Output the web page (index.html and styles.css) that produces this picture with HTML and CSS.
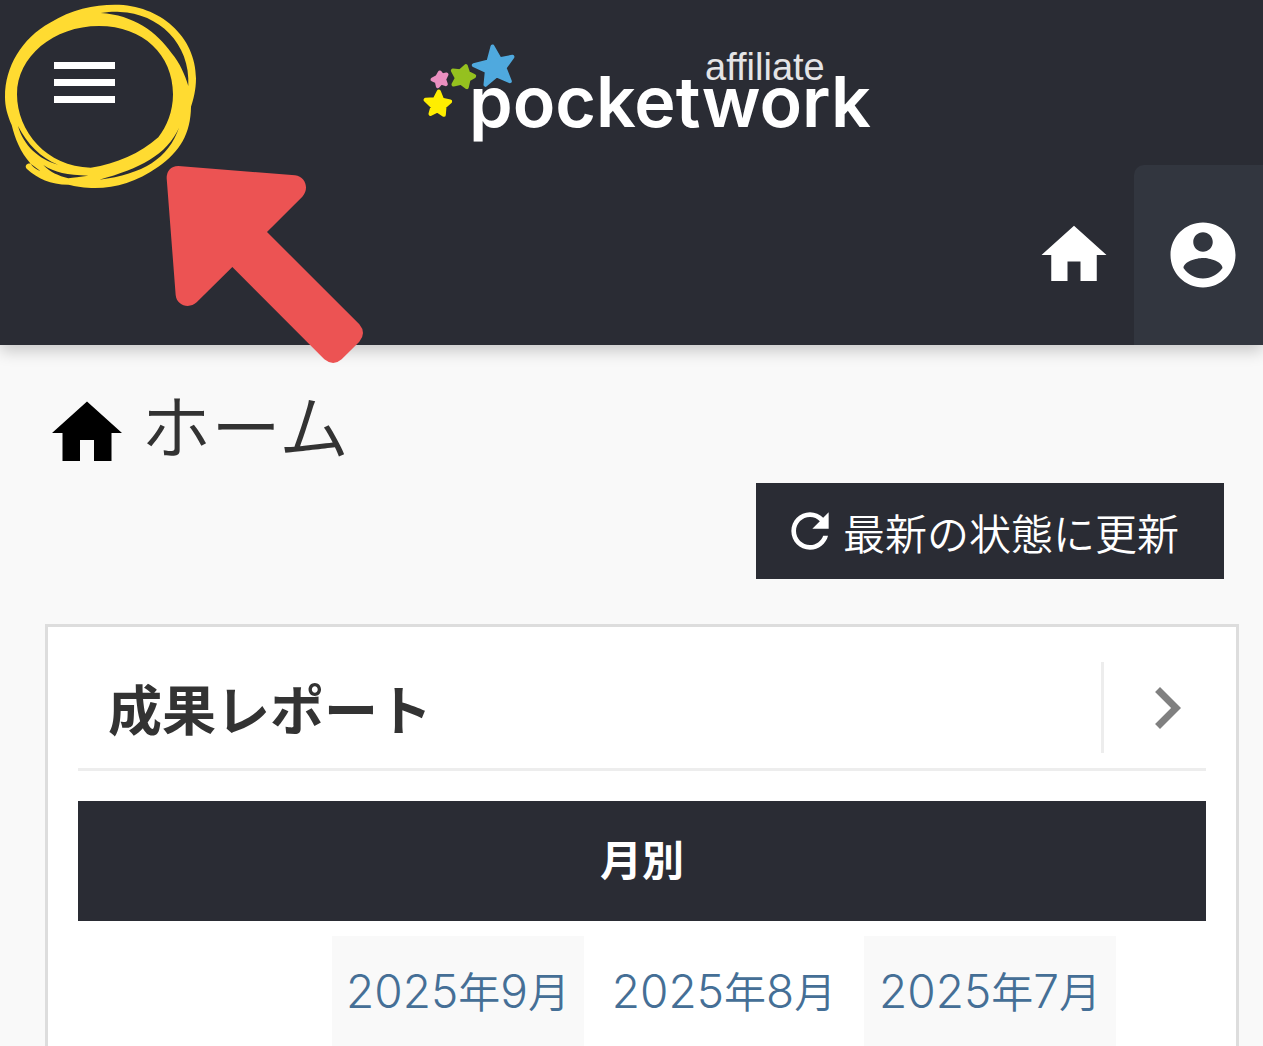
FILE: index.html
```html
<!DOCTYPE html>
<html lang="ja">
<head>
  <meta charset="UTF-8">
  <meta name="viewport" content="width=device-width, initial-scale=1">
  <title>ホーム | affiliate pocketwork</title>
  <link rel="stylesheet" href="styles.css">
</head>
<body>

  <header class="site-header">
    <div class="header-top">
      <button type="button" class="menu-btn" aria-label="メニュー">
        <span class="bar"></span>
        <span class="bar"></span>
        <span class="bar"></span>
      </button>
      <a href="#" class="logo">
        <svg width="480" height="120" viewBox="0 0 480 120">
          <g transform="translate(18.5 7.5) scale(.3333)" stroke-width="12" stroke-linejoin="round">
            <path fill="#4fa9de" stroke="#4fa9de" d="M246 48L268 86 306 79 282 112 298 152 258 135 225 163 229 122 190 104 234 93z"/>
            <path fill="#95c11f" stroke="#95c11f" d="M166 107L173 128 191 137 174 147 169 170 152 157 129 162 139 143 127 120 149 122z"/>
            <path fill="#ea8fc0" stroke="#ea8fc0" d="M88 126L95 135 108 132 101 147 106 161 92 156 82 167 79 153 66 147 80 140z"/>
            <path fill="#ffee00" stroke="#ffee00" d="M85 183L95 208 119 213 102 228 100 253 81 240 60 250 66 228 45 208 73 206z"/>
          </g>
          <text class="logo-sub" x="313" y="57">affiliate</text>
          <text class="logo-name" x="77" y="104">pocketwork</text>
        </svg>
      </a>
    </div>
    <nav class="header-nav">
      <a href="#" class="nav-item" aria-label="ホーム">
        <svg width="78" height="78" viewBox="0 0 24 24"><path d="M10 20v-6h4v6h5v-8h3L12 3 2 12h3v8z"/></svg>
      </a>
      <a href="#" class="nav-item account" aria-label="アカウント">
        <svg width="78" height="78" viewBox="0 0 24 24"><path d="M12 2C6.48 2 2 6.48 2 12s4.48 10 10 10 10-4.48 10-10S17.52 2 12 2zm0 3c1.66 0 3 1.34 3 3s-1.34 3-3 3-3-1.34-3-3 1.34-3 3-3zm0 14.2c-2.5 0-4.71-1.28-6-3.22.03-1.99 4-3.08 6-3.08 1.99 0 5.97 1.09 6 3.08-1.29 1.94-3.5 3.22-6 3.22z"/></svg>
      </a>
    </nav>
    <!-- Hand drawn circle and arrow pointing at the menu -->
    <svg class="guide" width="380" height="380" viewBox="0 0 1140 1140" aria-hidden="true">
      <path fill="#ffdb31" fill-rule="evenodd" d="M15 290C15 200 65 115 150 68C215 28 280 14 345 14C480 14 588 110 588 235C588 270 580 300 573 320C572 400 540 455 475 500C410 545 350 564 285 564C255 564 225 559 205 554C150 553 115 537 80 506C73 498 80 489 92 491C60 455 45 415 35 375C22 345 15 320 15 290z
        M51 283C51 395 140 500 272 503C350 492 420 460 475 412C500 380 519 335 519 283C519 165 430 78 297 78C160 78 51 170 51 283z
        M302 39C400 45 470 95 515 160C540 190 555 225 565 258C572 130 475 40 360 36C345 35 330 35 302 39z
        M54 378C70 435 115 478 174 494C120 472 82 432 54 378z
        M537 383C500 465 420 505 298 539C430 522 505 475 537 383z
        M130 495C150 517 175 527 205 535C220 532 240 531 265 527C200 525 165 518 130 495z
        M92 491C98 500 108 508 122 514z"/>
      <path fill="#ec5353" d="M535 498L885 526C918 530 928 568 907 590L801 696L1078 973Q1100 999 1078 1025L1025 1078Q1000 1100 973 1078L697 801L590 907C568 928 530 917 527 885L500 535Q500 500 535 498z"/>
    </svg>
  </header>

  <main class="content">
    <h1 class="page-title">
      <svg width="84" height="84" viewBox="0 0 24 24"><path d="M10 20v-6h4v6h5v-8h3L12 3 2 12h3v8z"/></svg>
      ホーム
    </h1>
    <div class="toolbar">
      <button type="button" class="refresh-btn">
        <svg width="56" height="56" viewBox="0 0 24 24"><path d="M17.65 6.35C16.2 4.9 14.21 4 12 4c-4.42 0-7.99 3.58-7.99 8s3.57 8 7.99 8c3.73 0 6.84-2.55 7.73-6h-2.08c-.82 2.33-3.04 4-5.65 4-3.31 0-6-2.69-6-6s2.69-6 6-6c1.66 0 3.14.69 4.22 1.78L13 11h7V4l-2.35 2.35z"/></svg>
        最新の状態に更新
      </button>
    </div>

    <section class="card">
      <div class="card-header">
        <h2>成果レポート</h2>
        <a href="#" class="more" aria-label="成果レポート">
          <svg width="28" height="42" viewBox="8 6 8 12"><path d="M10 6L8.59 7.41 13.17 12l-4.58 4.59L10 18l6-6z"/></svg>
        </a>
      </div>
      <h3 class="banner">月別</h3>
      <table class="months">
        <tr>
          <td class="label"></td>
          <th><a href="#"><span class="num">2025</span>年<span class="num">9</span>月</a></th>
          <th><a href="#"><span class="num">2025</span>年<span class="num">8</span>月</a></th>
          <th><a href="#"><span class="num">2025</span>年<span class="num">7</span>月</a></th>
          <td></td>
        </tr>
      </table>
    </section>
  </main>

</body>
</html>
```

FILE: styles.css
```css
* {
  box-sizing: border-box;
}

body {
  margin: 0;
  font-family: "Noto Sans CJK JP", sans-serif;
  font-size: 42px;
  font-weight: 350;
  color: #333;
  background: #f9f9f9;
}

svg {
  display: block;
  flex: none;
  fill: currentColor;
}

h1, h2, h3 {
  margin: 0;
}

a {
  color: #456f96;
  text-decoration: none;
}

/* Header */
.site-header {
  position: relative;
  background: #2a2c34;
  color: #fff;
  box-shadow: 0 6px 15px rgba(0, 0, 0, 0.2);
}

.header-top {
  display: grid;
  grid-template-columns: 1fr auto 1fr;
  align-items: center;
  height: 165px;
}

.menu-btn {
  display: flex;
  flex-direction: column;
  gap: 10px;
  justify-self: start;
  padding: 0;
  margin-left: 54px;
  border: none;
  background: none;
  cursor: pointer;
}

.bar {
  width: 61px;
  height: 7px;
  background: #fff;
}

.logo, .nav-item {
  color: #fff;
}

.logo-name {
  font-family: Inter, sans-serif;
  font-size: 70px;
  font-weight: 600;
}

.logo-sub {
  font-family: "Liberation Sans", sans-serif;
  font-size: 38px;
  fill: #e4e4e6;
}

.header-nav {
  display: flex;
  justify-content: flex-end;
  height: 180px;
}

.nav-item {
  display: flex;
  align-items: center;
  padding: 0 21px 0 30px;
}

.account {
  background: #32363f;
  border-top-left-radius: 10px;
}

.guide {
  position: absolute;
  top: 0;
  left: 0;
  pointer-events: none;
}

/* Page */
.content {
  padding: 40px 24px 0 45px;
}

.page-title {
  display: flex;
  gap: 12px;
  height: 90px;
  font-size: 70px;
  font-weight: 350;
  line-height: 78px;
}

.page-title svg {
  align-self: flex-end;
  fill: #000;
}

.toolbar {
  display: flex;
  justify-content: flex-end;
  padding: 8px 15px 45px 0;
}

.refresh-btn {
  display: flex;
  align-items: center;
  gap: 5px;
  height: 96px;
  padding: 0 45px 0 26px;
  border: none;
  background: #2a2c34;
  color: #fff;
  font: inherit;
  cursor: pointer;
}

.card {
  padding: 30px 30px 0;
  border: 3px solid #ddd;
  border-bottom: none;
  background: #fff;
}

.card-header {
  display: flex;
  justify-content: space-between;
  align-items: center;
  padding: 5px 0 15px 30px;
  border-bottom: 3px solid #ededed;
}

.card-header h2 {
  font-size: 54px;
  line-height: 91px;
}

.more {
  display: flex;
  align-items: center;
  height: 91px;
  padding: 0 25px 0 49px;
  border-left: 3px solid #ededed;
  color: #808080;
}

.banner {
  margin: 30px 0 0;
  padding-bottom: 6px;
  background: #2a2c34;
  color: #fff;
  font-size: 42px;
  line-height: 114px;
  text-align: center;
}

.months {
  width: 100%;
  margin-top: 15px;
  table-layout: fixed;
  border-collapse: separate;
  border-spacing: 0;
}

.months th {
  width: 266px;
  padding: 0 14px 0 0;
  font-weight: 350;
  white-space: nowrap;
}

.months .label {
  width: 254px;
}

.months a {
  display: block;
  height: 110px;
  line-height: 108px;
}

.months th:nth-child(even) a {
  background: #f9f9f9;
}

.num {
  font-family: Inter, sans-serif;
  font-size: 46px;
  font-weight: 300;
}
```
